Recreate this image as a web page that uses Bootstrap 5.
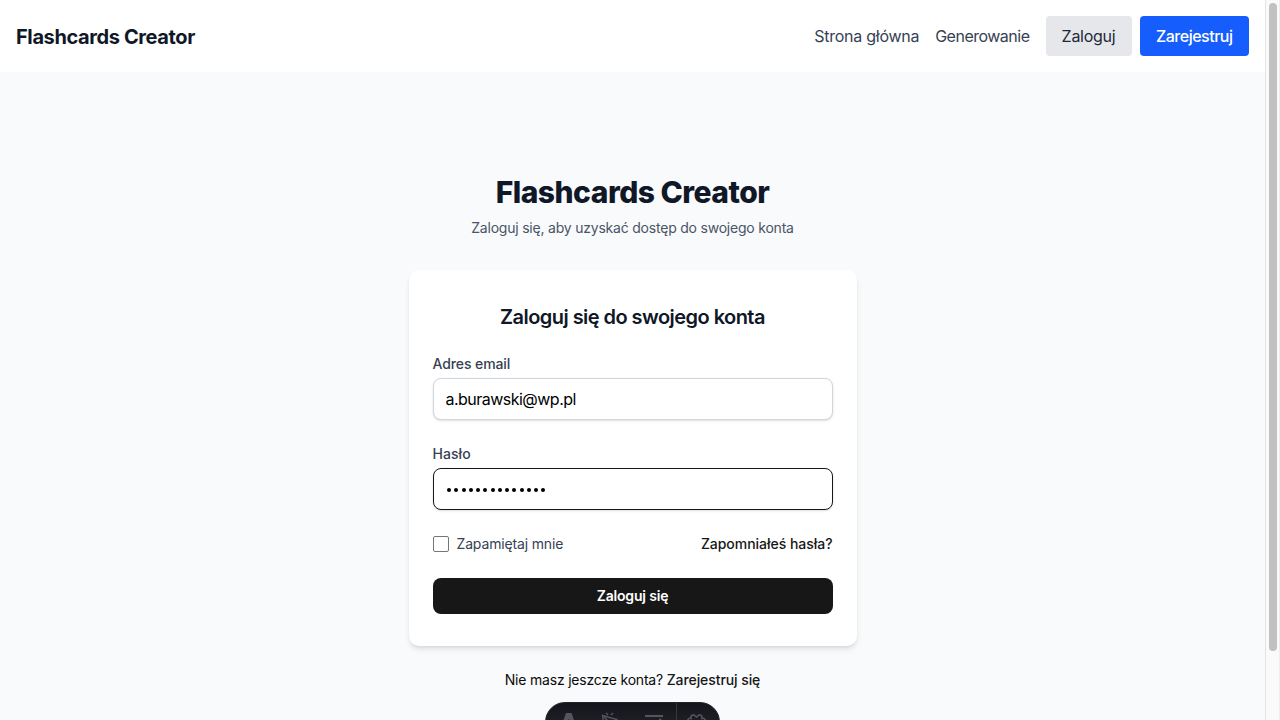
<!DOCTYPE html>
<html lang="pl">
<head>
<meta charset="utf-8">
<meta name="viewport" content="width=device-width, initial-scale=1">
<title>Flashcards Creator</title>
<link href="https://cdn.jsdelivr.net/npm/bootstrap@5.3.0/dist/css/bootstrap.min.css" rel="stylesheet">
<style>
  body { font-family: Inter, "Liberation Sans", sans-serif; background: #f9fafc; color: #0a0a0a; height: 720px; line-height: 1.5; }
  a { text-decoration: none; }
  .page { width: 1265px; }
  .topbar { height: 72px; padding: 0 16px; }
  .brand { font-size: 20px; font-weight: 700; color: #101828; letter-spacing: -.39px; line-height: 28px; padding-top: 1px; }
  .menu a { font-size: 16px; color: #364153; letter-spacing: -.27px; line-height: 24px; }
  .menu a.generate { letter-spacing: -.5px; }
  .menu .btn { padding: 8px 16px; border: 0; border-radius: 4px; white-space: nowrap; }
  .menu .btn-soft { background: #e5e7eb; color: #1e2939; width: 86px; }
  .menu .btn-blue { background: #155dfc; color: #fff; font-weight: 500; width: 109.5px; letter-spacing: -.5px; }
  .auth { width: 448px; padding-top: 102px; }
  h1 { font-size: 30px; line-height: 36px; font-weight: 800; color: #101828; letter-spacing: -.51px; }
  .sub { font-size: 14px; line-height: 20px; color: #4a5565; letter-spacing: -.21px; }
  .panel { margin-top: 32px; border-radius: 10px; padding: 32px 24px; background: #fff; box-shadow: 0 4px 6px -1px rgba(0,0,0,.1), 0 2px 4px -2px rgba(0,0,0,.1); }
  h2 { font-size: 20px; line-height: 28px; font-weight: 600; color: #101828; letter-spacing: -.55px; padding-top: 1px; height: 28px; }
  .form-label { font-size: 14px; line-height: 20px; font-weight: 500; color: #364153; margin-bottom: 4px; display: block; letter-spacing: -.1px; }
  .form-label.pass { letter-spacing: .05px; }
  .form-control, .form-control:focus { height: 42px; border: 1px solid #d1d5dc; border-radius: 8px; padding: 8px 12px; font-size: 16px; color: #000; background: #fff; letter-spacing: -.52px; box-shadow: 0 1px 3px rgba(0,0,0,.1), 0 1px 2px -1px rgba(0,0,0,.1); }
  .form-control.active { border-color: #171717; }
  .dots { display: flex; align-items: center; gap: 3.25px; padding-left: 13.5px !important; }
  .dots i { width: 4px; height: 4px; border-radius: 50%; background: #000; margin-top: 2px; }
  .small-row { font-size: 14px; line-height: 20px; height: 20px; }
  .form-check-input { width: 16px; height: 16px; margin: 0; border: 1px solid #767676; border-radius: 2px !important; }
  .remember { color: #364153; letter-spacing: -.15px; }
  .forgot { color: #171717; font-weight: 500; letter-spacing: -.03px; }
  .submit { background: #171717; color: #fff; font-size: 14px; line-height: 20px; font-weight: 600; letter-spacing: -.18px; border: 0; border-radius: 8px; padding: 8px; height: 36px; }
  .signup { font-size: 14px; line-height: 20px; color: #0a0a0a; letter-spacing: -.2px; }
  .signup a { color: #171717; font-weight: 500; letter-spacing: -.08px; }
  .toolbar { position: fixed; top: 702px; left: 545px; width: 175px; height: 40px; border-radius: 20px; background: linear-gradient(#14151a, #25262d 80%); border: 1px solid #22242b; overflow: hidden; }
  .toolbar svg { display: block; }
  .scroller { position: fixed; top: 0; right: 0; width: 15px; height: 720px; background: #fafafa; border-left: 1px solid #e4e4e4; border-right: 1px solid #ededed; padding: 3px 2px 0 3px; }
  .thumb { width: 8px; height: 648px; border-radius: 4px; background: #c1c1c1; }
</style>
</head>
<body class="overflow-hidden">
<div class="page">
  <header class="topbar bg-white d-flex align-items-center justify-content-between">
    <a class="brand" href="#">Flashcards Creator</a>
    <nav class="menu d-flex align-items-center gap-3">
      <a href="#">Strona główna</a>
      <a href="#" class="generate">Generowanie</a>
      <div class="d-flex gap-2">
        <a class="btn btn-soft" href="#">Zaloguj</a>
        <a class="btn btn-blue" href="#">Zarejestruj</a>
      </div>
    </nav>
  </header>
  <main class="auth mx-auto">
    <h1 class="text-center mb-2">Flashcards Creator</h1>
    <p class="sub text-center mb-0">Zaloguj się, aby uzyskać dostęp do swojego konta</p>
    <form class="panel">
      <h2 class="text-center mb-4">Zaloguj się do swojego konta</h2>
      <label class="form-label" for="email">Adres email</label>
      <input id="email" class="form-control mb-4" type="text" value="a.burawski@wp.pl">
      <label class="form-label pass">Hasło</label>
      <div class="form-control active dots mb-4"><i></i><i></i><i></i><i></i><i></i><i></i><i></i><i></i><i></i><i></i><i></i><i></i><i></i><i></i></div>
      <div class="small-row d-flex justify-content-between align-items-center mb-4">
        <div class="d-flex align-items-center gap-2"><input class="form-check-input" type="checkbox" id="rem"><label class="remember" for="rem">Zapamiętaj mnie</label></div>
        <a class="forgot" href="#">Zapomniałeś hasła?</a>
      </div>
      <button class="submit w-100 d-block" type="button">Zaloguj się</button>
    </form>
    <p class="signup text-center mt-4 mb-0">Nie masz jeszcze konta? <a href="#">Zarejestruj się</a></p>
  </main>
</div>
<div class="toolbar">
  <svg width="173" height="38" viewBox="546 703 173 38" fill="none" stroke="#54565e" stroke-width="1.3">
    <path d="M561.5 726L566 713H571.5L576 726H571.500L569 718.5L566 726Z" fill="#54565e" stroke="none"/>
    <path d="M604 725L602.5 715.5L617 719.5L616 723M604 717L611 724M608 715L606 713M611 715L613 713"/>
    <path d="M645 716H663" stroke-width="1.8"/>
    <path d="M659 719.5H661.500" stroke-width="1.4"/>
    <path d="M676.5 703V741" stroke="#35373e" stroke-width="1"/>
    <path d="M687.5 725V721C687.5 719 689 718 691 718.500C690.500 716 692 714.500 694 715L696.500 717L699 715C701 714.500 702.500 716 702 718.500C704 718 705.500 719 705.500 721V725M692.500 726A4 4.500 0 0 1 700.500 726" stroke-width="1.5"/>
  </svg>
</div>
<div class="scroller"><div class="thumb"></div></div>
<script src="https://cdn.jsdelivr.net/npm/bootstrap@5.3.0/dist/js/bootstrap.bundle.min.js"></script>
</body>
</html>
